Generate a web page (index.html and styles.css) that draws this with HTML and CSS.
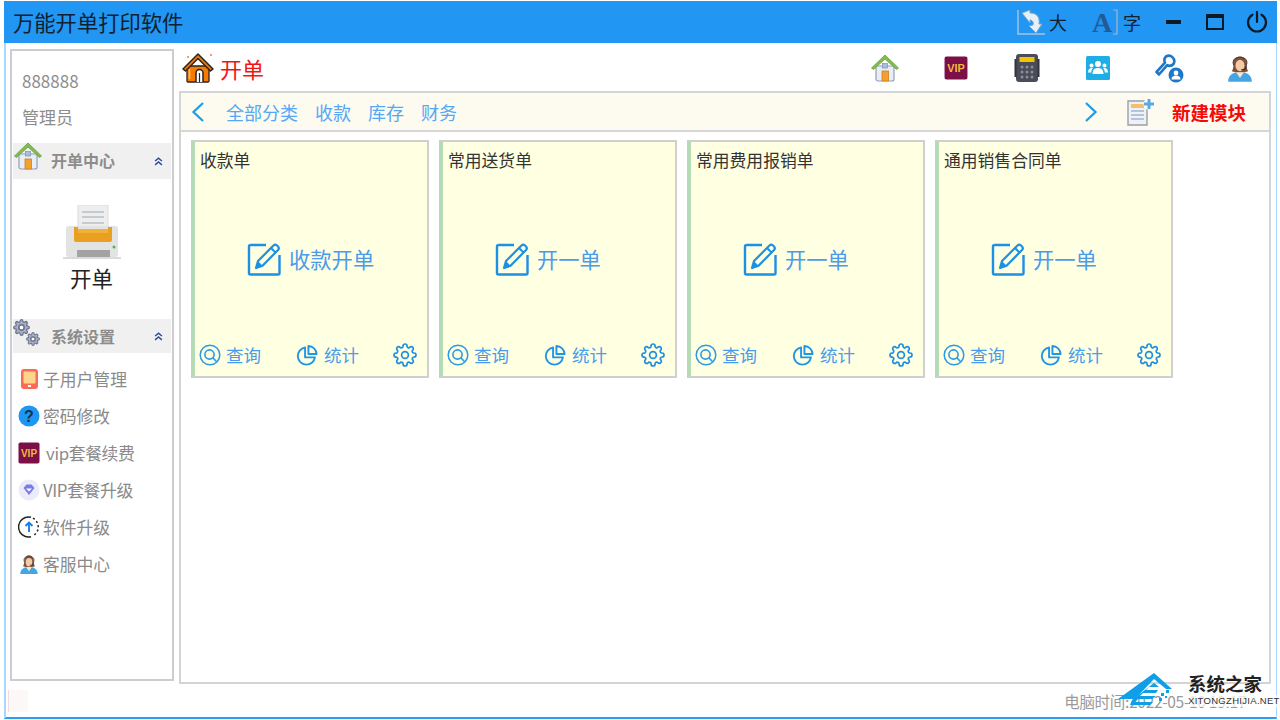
FILE: index.html
```html
<!DOCTYPE html>
<html lang="zh-CN">
<head>
<meta charset="utf-8">
<title>万能开单打印软件</title>
<link rel="stylesheet" href="styles.css">
</head>
<body>
<svg class="defs" xmlns="http://www.w3.org/2000/svg">
  <symbol id="i-edit" viewBox="0 0 34 34">
    <path d="M19 3H3.500A1.500 1.500 0 0 0 2 4.500V31a1.500 1.500 0 0 0 1.500 1.500H31a1.500 1.500 0 0 0 1.500-1.500V13" fill="none" stroke="#1c90e4" stroke-width="2.400"/>
    <path d="M9 26l2-7L26.500 3.500a2.500 2.500 0 0 1 3.500 0l1 1a2.500 2.500 0 0 1 0 3.500L15.500 23.800z" fill="none" stroke="#1c90e4" stroke-width="2.200" stroke-linejoin="round"/>
    <path d="M9 26l2-7 4.500 4.800z" fill="#1c90e4"/>
    <path d="M24 6l4.500 4.500" stroke="#1c90e4" stroke-width="2"/>
  </symbol>
  <symbol id="i-search" viewBox="0 0 22 22">
    <circle cx="11" cy="11" r="9.800" fill="none" stroke="#2c9be6" stroke-width="1.500"/>
    <circle cx="10.500" cy="10.500" r="4.600" fill="none" stroke="#2c9be6" stroke-width="1.600"/>
    <path d="M14 14l3 3" stroke="#2c9be6" stroke-width="1.700" stroke-linecap="round"/>
  </symbol>
  <symbol id="i-pie" viewBox="0 0 23 22">
    <path d="M9.500 3.200a9 9 0 1 0 10.300 10.300H9.500z" fill="none" stroke="#2096e4" stroke-width="2" stroke-linejoin="round"/>
    <path d="M13 1.500a9 9 0 0 1 8.500 8.500H13z" fill="none" stroke="#2096e4" stroke-width="2" stroke-linejoin="round"/>
  </symbol>
  <symbol id="i-gear" viewBox="0 0 24 24">
    <circle cx="12" cy="12" r="3.400" fill="none" stroke="currentColor" stroke-width="1.700"/>
    <path fill="none" stroke="currentColor" stroke-width="1.700" stroke-linejoin="round" d="M19.400 15a1.650 1.650 0 0 0 .33 1.820l.06.06a2 2 0 0 1 0 2.830 2 2 0 0 1-2.830 0l-.06-.06a1.650 1.650 0 0 0-1.820-.33 1.650 1.650 0 0 0-1 1.510V21a2 2 0 0 1-2 2 2 2 0 0 1-2-2v-.09A1.650 1.650 0 0 0 9 19.400a1.650 1.650 0 0 0-1.820.33l-.06.06a2 2 0 0 1-2.830 0 2 2 0 0 1 0-2.830l.06-.06a1.650 1.650 0 0 0 .33-1.820 1.650 1.650 0 0 0-1.510-1H3a2 2 0 0 1-2-2 2 2 0 0 1 2-2h.09A1.650 1.650 0 0 0 4.600 9a1.650 1.650 0 0 0-.33-1.820l-.06-.06a2 2 0 0 1 0-2.830 2 2 0 0 1 2.830 0l.06.06a1.650 1.650 0 0 0 1.820.33H9a1.650 1.650 0 0 0 1-1.510V3a2 2 0 0 1 2-2 2 2 0 0 1 2 2v.09a1.650 1.650 0 0 0 1 1.510 1.650 1.650 0 0 0 1.820-.33l.06-.06a2 2 0 0 1 2.830 0 2 2 0 0 1 0 2.830l-.06.06a1.650 1.650 0 0 0-.33 1.820V9a1.650 1.650 0 0 0 1.510 1H21a2 2 0 0 1 2 2 2 2 0 0 1-2 2h-.09a1.650 1.650 0 0 0-1.510 1z"/>
  </symbol>
  <symbol id="i-house" viewBox="0 0 30 30">
    <path d="M6 13h18v13a2 2 0 0 1-2 2H8a2 2 0 0 1-2-2z" fill="#e8edf6" stroke="#8f9fbd" stroke-width="1.200"/>
    <path d="M1.500 15L15 2l13.500 13-2 1.500L15 6 3.500 16.500z" fill="#82bb4e" stroke="#6a9e3c" stroke-width=".8" stroke-linejoin="round"/>
    <rect x="12" y="18" width="6.500" height="10" fill="#f2a02e" stroke="#cf8220" stroke-width=".8"/>
    <rect x="12.500" y="10.500" width="5" height="4.500" fill="#a9bde0" stroke="#7c90b8" stroke-width=".7"/>
  </symbol>
  <symbol id="i-vip" viewBox="0 0 22 22">
    <rect x=".5" y=".5" width="21" height="21" rx="1.800" fill="#7c0f48"/>
    <text x="11" y="15" text-anchor="middle" class="vip-text">VIP</text>
  </symbol>
  <symbol id="i-agent" viewBox="0 0 22 24">
    <path d="M1.500 23c0-5 3.500-7 6.500-7.500L11 19l3-3.500c3 .5 6.500 2.500 6.500 7.500z" fill="#45a5e2"/>
    <path d="M6 8c0-7 10-7 10 0 0 2 .5 5 1.500 6.500l-3.500 1H8l-3.500-1C5.500 13 6 10 6 8z" fill="#7d5038"/>
    <ellipse cx="11" cy="10" rx="3.600" ry="4.600" fill="#f4c9a6"/>
    <path d="M11 15.500l-3-.2 3 4.700 3-4.700z" fill="#fbe3cf"/>
    <path d="M6 10l-.5-2.500C6 2 16 2 16.500 7.500L16 10" fill="none" stroke="#4c3a30" stroke-width=".9"/>
    <path d="M16 10c0 2-1.500 3.500-4 3.500" fill="none" stroke="#333" stroke-width=".9"/>
  </symbol>
  <symbol id="i-gears" viewBox="0 0 27 27">
    <use href="#i-gear-solid" x="0" y="0" width="17" height="17"/>
    <use href="#i-gear-solid" x="13" y="13" width="14" height="14"/>
  </symbol>
  <symbol id="i-gear-solid" viewBox="0 0 24 24">
    <circle cx="12" cy="12" r="4" fill="#fff" stroke="#6c7590" stroke-width="2.500"/>
    <path fill="#aab0c2" stroke="#6c7590" stroke-width="1.800" fill-rule="evenodd" d="M19.400 15a1.650 1.650 0 0 0 .33 1.820l.06.06a2 2 0 0 1-2.830 2.830l-.06-.06a1.650 1.650 0 0 0-1.820-.33 1.650 1.650 0 0 0-1 1.510V21a2 2 0 0 1-4 0v-.09A1.650 1.650 0 0 0 9 19.400a1.650 1.650 0 0 0-1.820.33l-.06.06a2 2 0 0 1-2.830-2.830l.06-.06a1.650 1.650 0 0 0 .33-1.820 1.650 1.650 0 0 0-1.510-1H3a2 2 0 0 1 0-4h.09A1.650 1.650 0 0 0 4.600 9a1.650 1.650 0 0 0-.33-1.820l-.06-.06a2 2 0 0 1 2.830-2.830l.06.06a1.650 1.650 0 0 0 1.820.33H9a1.650 1.650 0 0 0 1-1.510V3a2 2 0 0 1 4 0v.09a1.650 1.650 0 0 0 1 1.510 1.650 1.650 0 0 0 1.820-.33l.06-.06a2 2 0 0 1 2.830 2.830l-.06.06a1.650 1.650 0 0 0-.33 1.820V9a1.650 1.650 0 0 0 1.510 1H21a2 2 0 0 1 0 4h-.09a1.650 1.650 0 0 0-1.510 1zM12 8a4 4 0 1 0 0 8 4 4 0 0 0 0-8z"/>
  </symbol>
</svg>

<div class="app">
  <header class="titlebar">
    <h1 class="app-title">万能开单打印软件</h1>
    <div class="win-tools">
      <div class="zoom-tool">
        <svg class="ic-resize" viewBox="0 0 28 26">
          <path d="M1 1v24h27" fill="none" stroke="#a9c4dc" stroke-width="1.400"/>
          <path d="M5 4l8-3v3c7 0 10 4 9 11h3l-6 9-7-7 4-1c1-3-1-5-3-5v3z" fill="#e4eff8" stroke="#7aa6c7" stroke-width="1"/>
        </svg>
        <span class="zoom-label">大</span>
      </div>
      <div class="zoom-tool zoom-tool-font">
        <svg class="ic-font" viewBox="0 0 28 26">
          <text x="11" y="23" text-anchor="middle" class="font-a">A</text>
          <path d="M22 1h4v24h-4M26 1v24" fill="none" stroke="#a7b6c4" stroke-width="1.200"/>
        </svg>
        <span class="zoom-label">字</span>
      </div>
      <span class="win-min"></span>
      <span class="win-max"></span>
      <svg class="win-power" viewBox="0 0 22 22">
        <path d="M6.500 3.700a9 9 0 1 0 9 0" fill="none" stroke="#0c1a26" stroke-width="2.200" stroke-linecap="round"/>
        <path d="M11 1v10" stroke="#0c1a26" stroke-width="2.200" stroke-linecap="round"/>
      </svg>
    </div>
  </header>

  <div class="workspace">
    <aside class="sidebar">
      <div class="user-block">
        <div class="user-line">888888</div>
        <div class="user-line">管理员</div>
      </div>

      <div class="side-head side-head-first">
        <svg class="side-head-ic"><use href="#i-house"/></svg>
        <span class="side-head-text">开单中心</span>
        <span class="side-chevron">
          <svg viewBox="0 0 8 8" class="chevron-svg"><path d="M1 3.500l3-2.500 3 2.500M1 7l3-2.500L7 7" fill="none" stroke="#2c4aa0" stroke-width="1.300"/></svg>
        </span>
      </div>

      <div class="side-print">
        <svg class="printer" viewBox="0 0 58 54">
          <rect x="15" y="0" width="30" height="28" fill="#eeeeee" stroke="#dcdcdc"/>
          <path d="M19 7h22M19 12h22M19 18h22" stroke="#b9c0c6" stroke-width="1.500"/>
          <rect x="3" y="21" width="52" height="31" rx="3" fill="#e3e3e3"/>
          <path d="M11 22h4v5h30v-5h4v13a2 2 0 0 1-2 2H13a2 2 0 0 1-2-2z" fill="#e99f1f"/>
          <rect x="15" y="24" width="30" height="4" fill="#f2b23a"/>
          <rect x="14" y="45" width="33" height="7" fill="#a3a3a3"/>
          <circle cx="51" cy="42" r="1.500" fill="#4bb84b"/>
          <path d="M0 53h58" stroke="#cfcfcf" stroke-width="1.400"/>
        </svg>
        <div class="side-print-label">开单</div>
      </div>

      <div class="side-head side-head-second">
        <svg class="side-head-ic side-head-gears"><use href="#i-gears"/></svg>
        <span class="side-head-text">系统设置</span>
        <span class="side-chevron">
          <svg viewBox="0 0 8 8" class="chevron-svg"><path d="M1 3.500l3-2.500 3 2.500M1 7l3-2.500L7 7" fill="none" stroke="#2c4aa0" stroke-width="1.300"/></svg>
        </span>
      </div>

      <ul class="side-menu">
        <li class="side-item">
          <svg class="item-ic" viewBox="0 0 22 22"><rect x="3" y="1" width="17" height="20" rx="3" fill="#fb6a55"/><rect x="5.500" y="3.500" width="12" height="12" rx="1" fill="#fcd58a"/><rect x="10" y="17" width="3" height="2" fill="#fff"/></svg>
          <span>子用户管理</span>
        </li>
        <li class="side-item">
          <svg class="item-ic" viewBox="0 0 22 22"><circle cx="11" cy="11" r="10.500" fill="#1e96f4"/><text x="11" y="17" text-anchor="middle" class="q-text">?</text></svg>
          <span>密码修改</span>
        </li>
        <li class="side-item side-item-vip">
          <svg class="item-ic"><use href="#i-vip"/></svg>
          <span class="latin-tight">vip套餐续费</span>
        </li>
        <li class="side-item">
          <svg class="item-ic" viewBox="0 0 22 22"><circle cx="11" cy="11" r="10.500" fill="#ecebf8"/><path d="M5.500 9l3-3.500h5l3 3.500-5.500 7z" fill="#7b7bea"/><path d="M8 9.500h6L11 12.500z" fill="#fff"/></svg>
          <span class="latin-tight">VIP套餐升级</span>
        </li>
        <li class="side-item">
          <svg class="item-ic" viewBox="0 0 22 22"><path d="M13 1.300A10 10 0 1 0 13 20.700" fill="none" stroke="#222" stroke-width="1.500"/><path d="M15 2.200A10 10 0 0 1 15 19.800" fill="none" stroke="#222" stroke-width="1.500" stroke-dasharray="2 2.400"/><path d="M11 16V7M7.500 10L11 6.500 14.500 10" fill="none" stroke="#1580ea" stroke-width="1.900"/></svg>
          <span>软件升级</span>
        </li>
        <li class="side-item">
          <svg class="item-ic"><use href="#i-agent"/></svg>
          <span>客服中心</span>
        </li>
      </ul>
    </aside>

    <main class="main">
      <div class="page-head">
        <div class="page-title">
          <svg class="page-ic" viewBox="0 0 32 32">
            <circle cx="6" cy="5" r="1.100" fill="#f08a3c"/><circle cx="29" cy="3" r="1.100" fill="#f08a3c"/>
            <path d="M5 14h22v15a1 1 0 0 1-1 1H6a1 1 0 0 1-1-1z" fill="#f57c00" stroke="#2a2320" stroke-width="1.300"/>
            <path d="M1 17L16 2l15 15-2.500 2L16 6.500 3.500 19z" fill="#f57c00" stroke="#2a2320" stroke-width="1.500" stroke-linejoin="round"/>
            <path d="M14 30V21a3.500 3.500 0 0 1 7 0v9" fill="#fff" stroke="#2a2320" stroke-width="1.500"/>
            <path d="M17.500 21v9" stroke="#2a2320" stroke-width="1.200"/>
            <path d="M7.500 17v10" stroke="#fbb87a" stroke-width="1.600"/>
          </svg>
          <span class="page-name">开单</span>
        </div>
        <nav class="quick-icons">
          <svg class="quick-ic"><use href="#i-house"/></svg>
          <svg class="quick-ic quick-vip"><use href="#i-vip"/></svg>
          <svg class="quick-ic" viewBox="0 0 30 30">
            <rect x="4" y="1" width="22" height="28" rx="3" fill="#4a4d57"/>
            <rect x="2.500" y="6" width="2" height="18" fill="#33353c"/><rect x="25.500" y="6" width="2" height="18" fill="#33353c"/>
            <rect x="7.500" y="4" width="15" height="5" fill="#f5c400"/>
            <g fill="#8a8d97"><circle cx="10" cy="14" r="1.500"/><circle cx="15" cy="14" r="1.500"/><circle cx="20" cy="14" r="1.500"/><circle cx="10" cy="19" r="1.500"/><circle cx="15" cy="19" r="1.500"/><circle cx="20" cy="19" r="1.500"/><circle cx="10" cy="24" r="1.500"/><circle cx="15" cy="24" r="1.500"/><circle cx="20" cy="24" r="1.500"/></g>
          </svg>
          <svg class="quick-ic" viewBox="0 0 30 30">
            <rect x="3" y="3" width="24" height="24" rx="1.500" fill="#1eaee6"/>
            <g fill="#fff"><circle cx="15" cy="11" r="3"/><path d="M9.500 21c0-4 2-6 5.500-6s5.500 2 5.500 6z"/><circle cx="8.500" cy="12.500" r="2"/><path d="M5 19.500c0-3 1.500-4.500 3.500-4.500 1 0 1.500.3 1.500.3-1.200 1-1.800 2.500-1.800 4.200z"/><circle cx="21.500" cy="12.500" r="2"/><path d="M25 19.500c0-3-1.500-4.500-3.500-4.500-1 0-1.500.3-1.500.3 1.200 1 1.800 2.500 1.800 4.200z"/></g>
          </svg>
          <svg class="quick-ic" viewBox="0 0 30 30">
            <path d="M12 3.500a5.500 5.500 0 0 1 7.500 7.500 5.500 5.500 0 0 1-6.300 1.200L5 21.500 2.500 19l8.500-9.300A5.500 5.500 0 0 1 12 3.500z" fill="#fff" stroke="#1e78c8" stroke-width="2.600" stroke-linejoin="round"/>
            <circle cx="22" cy="22" r="7.500" fill="#1e78c8"/>
            <circle cx="22" cy="20" r="2.400" fill="#fff"/><path d="M17.500 26.500c0-3 2-4 4.500-4s4.500 1 4.500 4z" fill="#fff"/>
          </svg>
          <svg class="quick-ic"><use href="#i-agent"/></svg>
        </nav>
      </div>

      <section class="panel">
        <div class="tabbar">
          <svg class="tab-arrow" viewBox="0 0 14 20"><path d="M12 1L2.500 10l9.500 9" fill="none" stroke="#1ba0e8" stroke-width="2.300"/></svg>
          <a class="tab tab-first">全部分类</a>
          <a class="tab">收款</a>
          <a class="tab">库存</a>
          <a class="tab">财务</a>
          <svg class="tab-arrow tab-arrow-right" viewBox="0 0 14 20"><path d="M2 1l9.500 9L2 19" fill="none" stroke="#1ba0e8" stroke-width="2.300"/></svg>
          <svg class="new-ic" viewBox="0 0 28 28">
            <path d="M1 3h19v24H1z" fill="#eef1f6" stroke="#9a9fa8" stroke-width="1.400"/>
            <rect x="4" y="6" width="13" height="4" fill="#f3bf6b"/>
            <path d="M4 13h13M4 17h13M4 21h13" stroke="#b4c3da" stroke-width="2.200"/>
            <circle cx="22" cy="6" r="5.500" fill="#fff"/>
            <path d="M22 1v10M17 6h10" stroke="#5aa8e0" stroke-width="3"/>
          </svg>
          <a class="new-module">新建模块</a>
        </div>

        <div class="cards">
          <article class="card">
            <h2 class="card-title">收款单</h2>
            <div class="card-action"><svg class="edit-ic"><use href="#i-edit"/></svg><span>收款开单</span></div>
            <div class="card-foot">
              <div class="foot-item foot-query"><svg class="foot-ic"><use href="#i-search"/></svg><span>查询</span></div>
              <div class="foot-item foot-stat"><svg class="foot-ic"><use href="#i-pie"/></svg><span>统计</span></div>
              <svg class="foot-gear"><use href="#i-gear"/></svg>
            </div>
          </article>
          <article class="card">
            <h2 class="card-title">常用送货单</h2>
            <div class="card-action"><svg class="edit-ic"><use href="#i-edit"/></svg><span>开一单</span></div>
            <div class="card-foot">
              <div class="foot-item foot-query"><svg class="foot-ic"><use href="#i-search"/></svg><span>查询</span></div>
              <div class="foot-item foot-stat"><svg class="foot-ic"><use href="#i-pie"/></svg><span>统计</span></div>
              <svg class="foot-gear"><use href="#i-gear"/></svg>
            </div>
          </article>
          <article class="card">
            <h2 class="card-title">常用费用报销单</h2>
            <div class="card-action"><svg class="edit-ic"><use href="#i-edit"/></svg><span>开一单</span></div>
            <div class="card-foot">
              <div class="foot-item foot-query"><svg class="foot-ic"><use href="#i-search"/></svg><span>查询</span></div>
              <div class="foot-item foot-stat"><svg class="foot-ic"><use href="#i-pie"/></svg><span>统计</span></div>
              <svg class="foot-gear"><use href="#i-gear"/></svg>
            </div>
          </article>
          <article class="card">
            <h2 class="card-title">通用销售合同单</h2>
            <div class="card-action"><svg class="edit-ic"><use href="#i-edit"/></svg><span>开一单</span></div>
            <div class="card-foot">
              <div class="foot-item foot-query"><svg class="foot-ic"><use href="#i-search"/></svg><span>查询</span></div>
              <div class="foot-item foot-stat"><svg class="foot-ic"><use href="#i-pie"/></svg><span>统计</span></div>
              <svg class="foot-gear"><use href="#i-gear"/></svg>
            </div>
          </article>
        </div>
      </section>
    </main>
  </div>

  <footer class="statusbar">
    <span class="status-mark"></span>
    <span class="status-time">电脑时间:2022-05-10 13:17</span>
  </footer>
</div>

<div class="watermark">
  <svg class="wm-logo" viewBox="0 0 62 46">
    <path d="M0 27L36 1l18 16-6 0L36 7 17 27z" fill="#109fe6"/>
    <path d="M14 28L36 11l5 4H31l-3 3h12l-2 3H25l-3 3h16l-4 3H20l-3 3h18l-3 3H12z" fill="#109fe6"/>
    <g fill="#109fe6"><rect x="43" y="21" width="3" height="3"/><rect x="48" y="18" width="3" height="3"/><rect x="41" y="26" width="3" height="3"/><rect x="47" y="24" width="2" height="2"/></g>
  </svg>
  <div class="wm-text">
    <div class="wm-name">系统之家</div>
    <div class="wm-url">XITONGZHIJIA.NET</div>
  </div>
</div>
</body>
</html>
```

FILE: styles.css
```css
* { box-sizing: border-box; }

html, body {
  margin: 0;
  padding: 0;
  width: 1280px;
  height: 720px;
  overflow: hidden;
  background: #fff;
  font-family: "Noto Sans CJK SC", "Noto Sans", sans-serif;
}

.defs { display: none; }

.vip-text {
  font: 700 10px "Liberation Sans", sans-serif;
  fill: #f0b93a;
}

.q-text {
  font: 700 16px "Liberation Sans", sans-serif;
  fill: #16324f;
}

.font-a {
  font: 700 28px "Liberation Serif", serif;
  fill: #245a96;
}

.app {
  width: 1273px;
  height: 718px;
  margin: 1px 0 0 4px;
  border-left: 2px solid #a9d8fb;
  border-right: 1px solid #a9d8fb;
  border-bottom: 2px solid #2f9cf2;
  display: flex;
  flex-direction: column;
}

/* title bar */
.titlebar {
  flex: 0 0 42px;
  margin-left: -2px;
  margin-right: -1px;
  background: #2196f3;
  display: flex;
  align-items: center;
  padding: 0 9px 0 9px;
}

.app-title {
  margin: 0;
  font-size: 21.300px;
  font-weight: 400;
  line-height: 42px;
  color: #10202e;
}

.win-tools {
  margin-left: auto;
  display: flex;
  align-items: center;
}

.zoom-tool {
  display: flex;
  align-items: center;
  gap: 4px;
  margin-right: 24px;
}

.zoom-tool-font { margin-right: 25px; }

.ic-resize, .ic-font {
  width: 28px;
  height: 26px;
  overflow: visible;
}

.zoom-label {
  font-size: 18px;
  line-height: 26px;
  color: #10202e;
}

.win-min {
  width: 15px;
  height: 4px;
  background: #0c1a26;
  margin-right: 25px;
}

.win-max {
  width: 18px;
  height: 16px;
  border: 2px solid #0c1a26;
  border-top-width: 4px;
  margin-right: 22px;
}

.win-power {
  width: 22px;
  height: 22px;
}

/* workspace */
.workspace {
  flex: 0 0 641px;
  display: flex;
  gap: 5px;
  padding: 6px 5px 0 4px;
}

.sidebar {
  width: 164px;
  height: 632px;
  border: 2px solid #cdcdcd;
  padding: 0 1px;
  color: #8a8a8a;
}

.user-block {
  padding-top: 12px;
  height: 92px;
}

.user-line {
  font-size: 17px;
  line-height: 36px;
  padding-left: 9px;
  color: #8d8d8d;
}

.side-head {
  height: 36px;
  background: #f0f0f0;
  display: flex;
  align-items: center;
}

.side-head-ic {
  width: 30px;
  height: 30px;
  flex: none;
  position: relative;
  top: -5px;
}

.side-head-gears {
  width: 27px;
  height: 27px;
  top: -4px;
}

.side-head-text {
  font-size: 16px;
  line-height: 22px;
  font-weight: 700;
  color: #8c8c8c;
  margin: -2px 0 0 8px;
}

.side-head-gears + .side-head-text { margin-left: 11px; margin-top: 0; }

.side-chevron {
  margin-left: auto;
  margin-right: 8px;
  display: flex;
}

.chevron-svg {
  width: 9px;
  height: 9px;
}

.side-print {
  height: 140px;
  display: flex;
  flex-direction: column;
  align-items: center;
  padding-top: 26px;
}

.printer {
  width: 58px;
  height: 54px;
}

.side-print-label {
  font-size: 21.500px;
  line-height: 32px;
  margin-top: 3px;
  color: #222;
  padding-right: 1px;
}

.side-head-second { height: 34px; }

.side-menu {
  list-style: none;
  margin: 7px 0 0;
  padding: 0 0 0 5px;
}

.side-item {
  height: 37px;
  display: flex;
  align-items: center;
  gap: 3px;
  font-size: 16.800px;
  color: #8a8a8a;
}

.latin-tight { letter-spacing: -.35px; }

.item-ic {
  width: 22px;
  height: 22px;
  flex: none;
}

.side-item-vip { gap: 6px; }

/* main */
.main {
  flex: 1;
  display: flex;
  flex-direction: column;
  min-width: 0;
}

.page-head {
  height: 42px;
  flex: none;
  display: flex;
  align-items: center;
  padding: 0 16px 4px 3px;
}

.page-title {
  display: flex;
  align-items: center;
  gap: 6px;
}

.page-ic {
  width: 32px;
  height: 32px;
}

.page-name {
  font-size: 22px;
  line-height: 32px;
  color: #f01414;
}

.quick-icons {
  margin-left: auto;
  display: flex;
  align-items: center;
  gap: 41px;
}

.quick-ic {
  width: 30px;
  height: 30px;
}

.quick-vip {
  width: 24px;
  height: 24px;
  margin: 0 3px;
}

.panel {
  flex: 1;
  border: 2px solid #d4d4d4;
  min-height: 0;
}

.tabbar {
  height: 39px;
  background: #fdfaf0;
  border-bottom: 2px solid #d7d7d7;
  display: flex;
  align-items: center;
  padding-left: 10px;
  padding-right: 23px;
}

.tab-arrow {
  width: 14px;
  height: 20px;
  flex: none;
}

.tab {
  font-size: 18px;
  color: #54a8f4;
  margin: 1px 0 0 17px;
  line-height: 26px;
  white-space: nowrap;
}

.tab-first { margin-left: 21px; }

.tab-arrow-right { margin-left: auto; }

.new-ic {
  width: 28px;
  height: 28px;
  margin-left: 29px;
}

.new-module {
  font-size: 18.500px;
  font-weight: 700;
  color: #f40a0a;
  margin-left: 17px;
  white-space: nowrap;
}

.cards {
  display: flex;
  gap: 10px;
  padding: 8px 0 0 10px;
}

.card {
  width: 238px;
  height: 238px;
  flex: none;
  background: #ffffe2;
  border: 2px solid #cfcfcf;
  border-left: 4px solid #b4dab6;
  display: flex;
  flex-direction: column;
  padding-bottom: 9px;
}

.card-title {
  margin: 0;
  font-size: 16.800px;
  font-weight: 400;
  line-height: 26px;
  color: #333;
  padding: 5px 0 0 5px;
}

.card-action {
  margin-top: 69px;
  padding-left: 52px;
  display: flex;
  align-items: center;
  gap: 8px;
  font-size: 21.300px;
  line-height: 34px;
  color: #4a9bec;
}

.edit-ic {
  width: 34px;
  height: 34px;
  flex: none;
}

.card-foot {
  margin-top: auto;
  display: flex;
  align-items: center;
  padding-left: 4px;
  height: 24px;
}

.foot-item {
  display: flex;
  align-items: center;
  gap: 5px;
  font-size: 17.500px;
  line-height: 24px;
  color: #4a9bec;
}

.foot-query { width: 97px; }

.foot-stat { width: 97px; gap: 6px; }

.foot-ic {
  width: 22px;
  height: 22px;
  flex: none;
}

.foot-gear {
  width: 24px;
  height: 24px;
  color: #1c8fe2;
  flex: none;
}

/* status bar */
.statusbar {
  flex: 1;
  display: flex;
  align-items: center;
  padding: 0 0 0 2px;
  min-height: 0;
}

.status-mark {
  width: 20px;
  height: 22px;
  background: #fdf8f8;
  border-left: 1px solid #f3dbe6;
}

.status-time {
  margin-left: auto;
  margin-right: 30px;
  font-size: 15.500px;
  letter-spacing: -.3px;
  color: #9a9a9a;
  white-space: nowrap;
}

/* watermark overlays the bottom-right corner */
.watermark {
  position: absolute;
  left: 1118px;
  top: 672px;
  width: 162px;
  height: 48px;
  display: flex;
  align-items: flex-start;
}

.wm-logo {
  width: 62px;
  height: 46px;
  flex: none;
}

.wm-text {
  margin-left: 8px;
  padding-top: 0;
}

.wm-name {
  font-size: 18.500px;
  font-weight: 700;
  line-height: 22px;
  color: #222;
  white-space: nowrap;
}

.wm-url {
  margin-top: 1px;
  font: 400 9.500px/12px "Liberation Sans", sans-serif;
  letter-spacing: .3px;
  color: #333;
  background: rgba(255,255,255,.75);
  white-space: nowrap;
}
```
